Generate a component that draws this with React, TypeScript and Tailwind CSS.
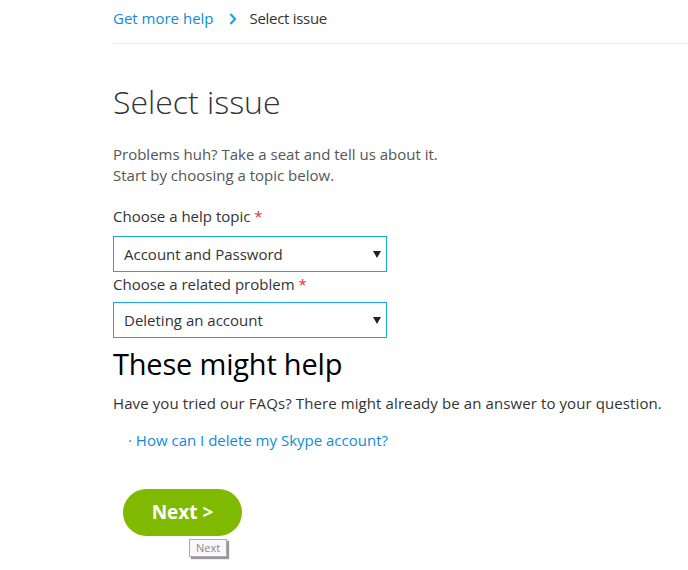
const font = { fontFamily: '"Open Sans", "Noto Sans", Arial, sans-serif' };

function SelectBox({ value }: { value: string }) {
  return (
    <div className="flex h-[36px] w-[274px] items-center justify-between border border-[#1aa7e8] bg-white pl-[10px] pr-[5px] text-[15px] text-[#333]">
      <span>{value}</span>
      <svg width="8" height="7" viewBox="0 0 8 7" className="mt-[1px]">
        <path d="M0 0 H8 L4 7 Z" fill="#222" />
      </svg>
    </div>
  );
}

function Label({ text }: { text: string }) {
  return (
    <div className="text-[15px] leading-[20px] text-[#333]">
      {text} <span className="text-[#d9333f]">*</span>
    </div>
  );
}

export default function App() {
  return (
    <div style={font} className="h-[570px] w-[688px] overflow-hidden bg-white">
      <div className="ml-[113px]">
        <nav className="flex h-[44px] items-center border-b border-[#dcf2fb] pb-[6px] text-[15px]">
          <a className="text-[#0f8cd8]">Get more help</a>
          <svg width="8" height="12" viewBox="0 0 8 12" className="ml-[15px] mr-[13px]">
            <path d="M1.5 1 L6 6 L1.5 11" stroke="#1aa7e8" strokeWidth="2.2" fill="none" />
          </svg>
          <span className="tracking-[-0.3px] text-[#333]">Select issue</span>
        </nav>

        <h1 className="mt-[38px] text-[32px] font-light leading-[40px] text-[#333]">Select issue</h1>

        <p className="mt-[22px] text-[15px] leading-[21px] text-[#555]">
          Problems huh? Take a seat and tell us about it.
          <br />
          Start by choosing a topic below.
        </p>

        <div className="mt-[20px] flex flex-col">
          <Label text="Choose a help topic" />
          <div className="mt-[10px]">
            <SelectBox value="Account and Password" />
          </div>
          <div className="mt-[2px]">
            <Label text="Choose a related problem" />
          </div>
          <div className="mt-[8px]">
            <SelectBox value="Deleting an account" />
          </div>
        </div>

        <h2 className="mt-[7px] text-[29px] leading-[38px] tracking-[-0.2px] text-black">These might help</h2>
        <p className="mt-[10px] text-[15px] leading-[20px] tracking-[0.1px] text-[#333]">
          Have you tried our FAQs? There might already be an answer to your question.
        </p>
        <a className="ml-[15px] mt-[17px] block text-[15px] leading-[20px] text-[#0f8cd8]">
          · How can I delete my Skype account?
        </a>

        <div className="relative ml-[10px] mt-[39px] w-fit">
          <button className="flex h-[47px] w-[119px] items-center justify-center rounded-full bg-[#7fba00] text-[19px] font-bold text-white">
            Next &gt;
          </button>
          <div className="absolute left-[66px] top-[50px] border border-[#aaa] bg-[#f8f8f8] px-[6px] text-[11px] leading-[16px] text-[#888] shadow-[2px_2px_1px_#999]">
            Next
          </div>
        </div>
      </div>
    </div>
  );
}
